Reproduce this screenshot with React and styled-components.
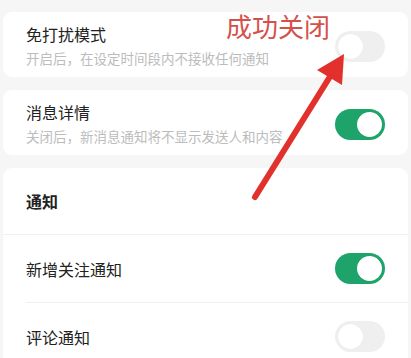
import React, { useState } from "react";
import styled, { createGlobalStyle } from "styled-components";

const GlobalStyle = createGlobalStyle`
  html, body {
    margin: 0;
    padding: 0;
    background: #f6f6f6;
    font-family: "Noto Sans CJK SC", "Noto Sans", sans-serif;
  }
`;

const Page = styled.div`
  position: relative;
  width: 411px;
  height: 358px;
  overflow: hidden;
  padding: 12px 3px 0;
  box-sizing: border-box;
  display: flex;
  flex-direction: column;
  gap: 13px;
`;

const Card = styled.div`
  background: #ffffff;
  border-radius: 9px;
  display: flex;
  flex-direction: column;
`;

const SwitchRow = styled.div`
  display: flex;
  align-items: center;
  justify-content: space-between;
  padding: 13px 23px 10px 23px;
`;

const TextCol = styled.div`
  display: flex;
  flex-direction: column;
  gap: 6px;
`;

const Title = styled.div`
  font-size: 16px;
  line-height: 18px;
  color: #222;
`;

const Sub = styled.div`
  font-size: 13.5px;
  line-height: 18px;
  color: #bcbcbc;
`;

const Header = styled.div`
  height: 66px;
  display: flex;
  align-items: center;
  padding: 0 23px;
  font-size: 16px;
  font-weight: 700;
  color: #222;
  border-bottom: 1px solid #f0f0f0;
`;

const ListRow = styled.div`
  height: 67px;
  display: flex;
  align-items: center;
  justify-content: space-between;
  margin-left: 23px;
  padding-right: 23px;
  font-size: 16px;
  color: #222;
  border-bottom: ${(p) => (p.last ? "none" : "1px solid #f0f0f0")};
`;

const Track = styled.button`
  width: 50px;
  height: 31px;
  border: none;
  padding: 3px;
  border-radius: 16px;
  background: ${(p) => (p.on ? "#1ea36b" : "#efefef")};
  display: flex;
  justify-content: ${(p) => (p.on ? "flex-end" : "flex-start")};
  cursor: pointer;
  flex-shrink: 0;
`;

const Knob = styled.span`
  width: 25px;
  height: 25px;
  border-radius: 50%;
  background: #fff;
  box-shadow: 0 0 1px rgba(0, 0, 0, 0.08);
`;

const Note = styled.div`
  position: absolute;
  left: 226px;
  top: 11px;
  font-size: 26px;
  line-height: 30px;
  color: #d4504a;
`;

const Arrow = styled.svg`
  position: absolute;
  left: 0;
  top: 0;
  pointer-events: none;
`;

function Toggle({ on, onClick }) {
  return (
    <Track on={on ? 1 : 0} onClick={onClick}>
      <Knob />
    </Track>
  );
}

export default function App() {
  const [vals, setVals] = useState({ dnd: false, detail: true, follow: true, comment: false });
  const flip = (k) => setVals({ ...vals, [k]: !vals[k] });

  return (
    <>
      <GlobalStyle />
      <Page>
        <Card>
          <SwitchRow>
            <TextCol>
              <Title>免打扰模式</Title>
              <Sub>开启后，在设定时间段内不接收任何通知</Sub>
            </TextCol>
            <Toggle on={vals.dnd} onClick={() => flip("dnd")} />
          </SwitchRow>
        </Card>
        <Card>
          <SwitchRow>
            <TextCol>
              <Title>消息详情</Title>
              <Sub>关闭后，新消息通知将不显示发送人和内容</Sub>
            </TextCol>
            <Toggle on={vals.detail} onClick={() => flip("detail")} />
          </SwitchRow>
        </Card>
        <Card>
          <Header>通知</Header>
          <ListRow>
            新增关注通知
            <Toggle on={vals.follow} onClick={() => flip("follow")} />
          </ListRow>
          <ListRow last>
            评论通知
            <Toggle on={vals.comment} onClick={() => flip("comment")} />
          </ListRow>
        </Card>

        <Note>成功关闭</Note>
        <Arrow width="411" height="358" viewBox="0 0 411 358">
          <line x1="255" y1="197" x2="331" y2="75" stroke="#e2302d" strokeWidth="6" strokeLinecap="round" />
          <polygon points="344,54 342,85 317,70" fill="#e2302d" />
        </Arrow>
      </Page>
    </>
  );
}
